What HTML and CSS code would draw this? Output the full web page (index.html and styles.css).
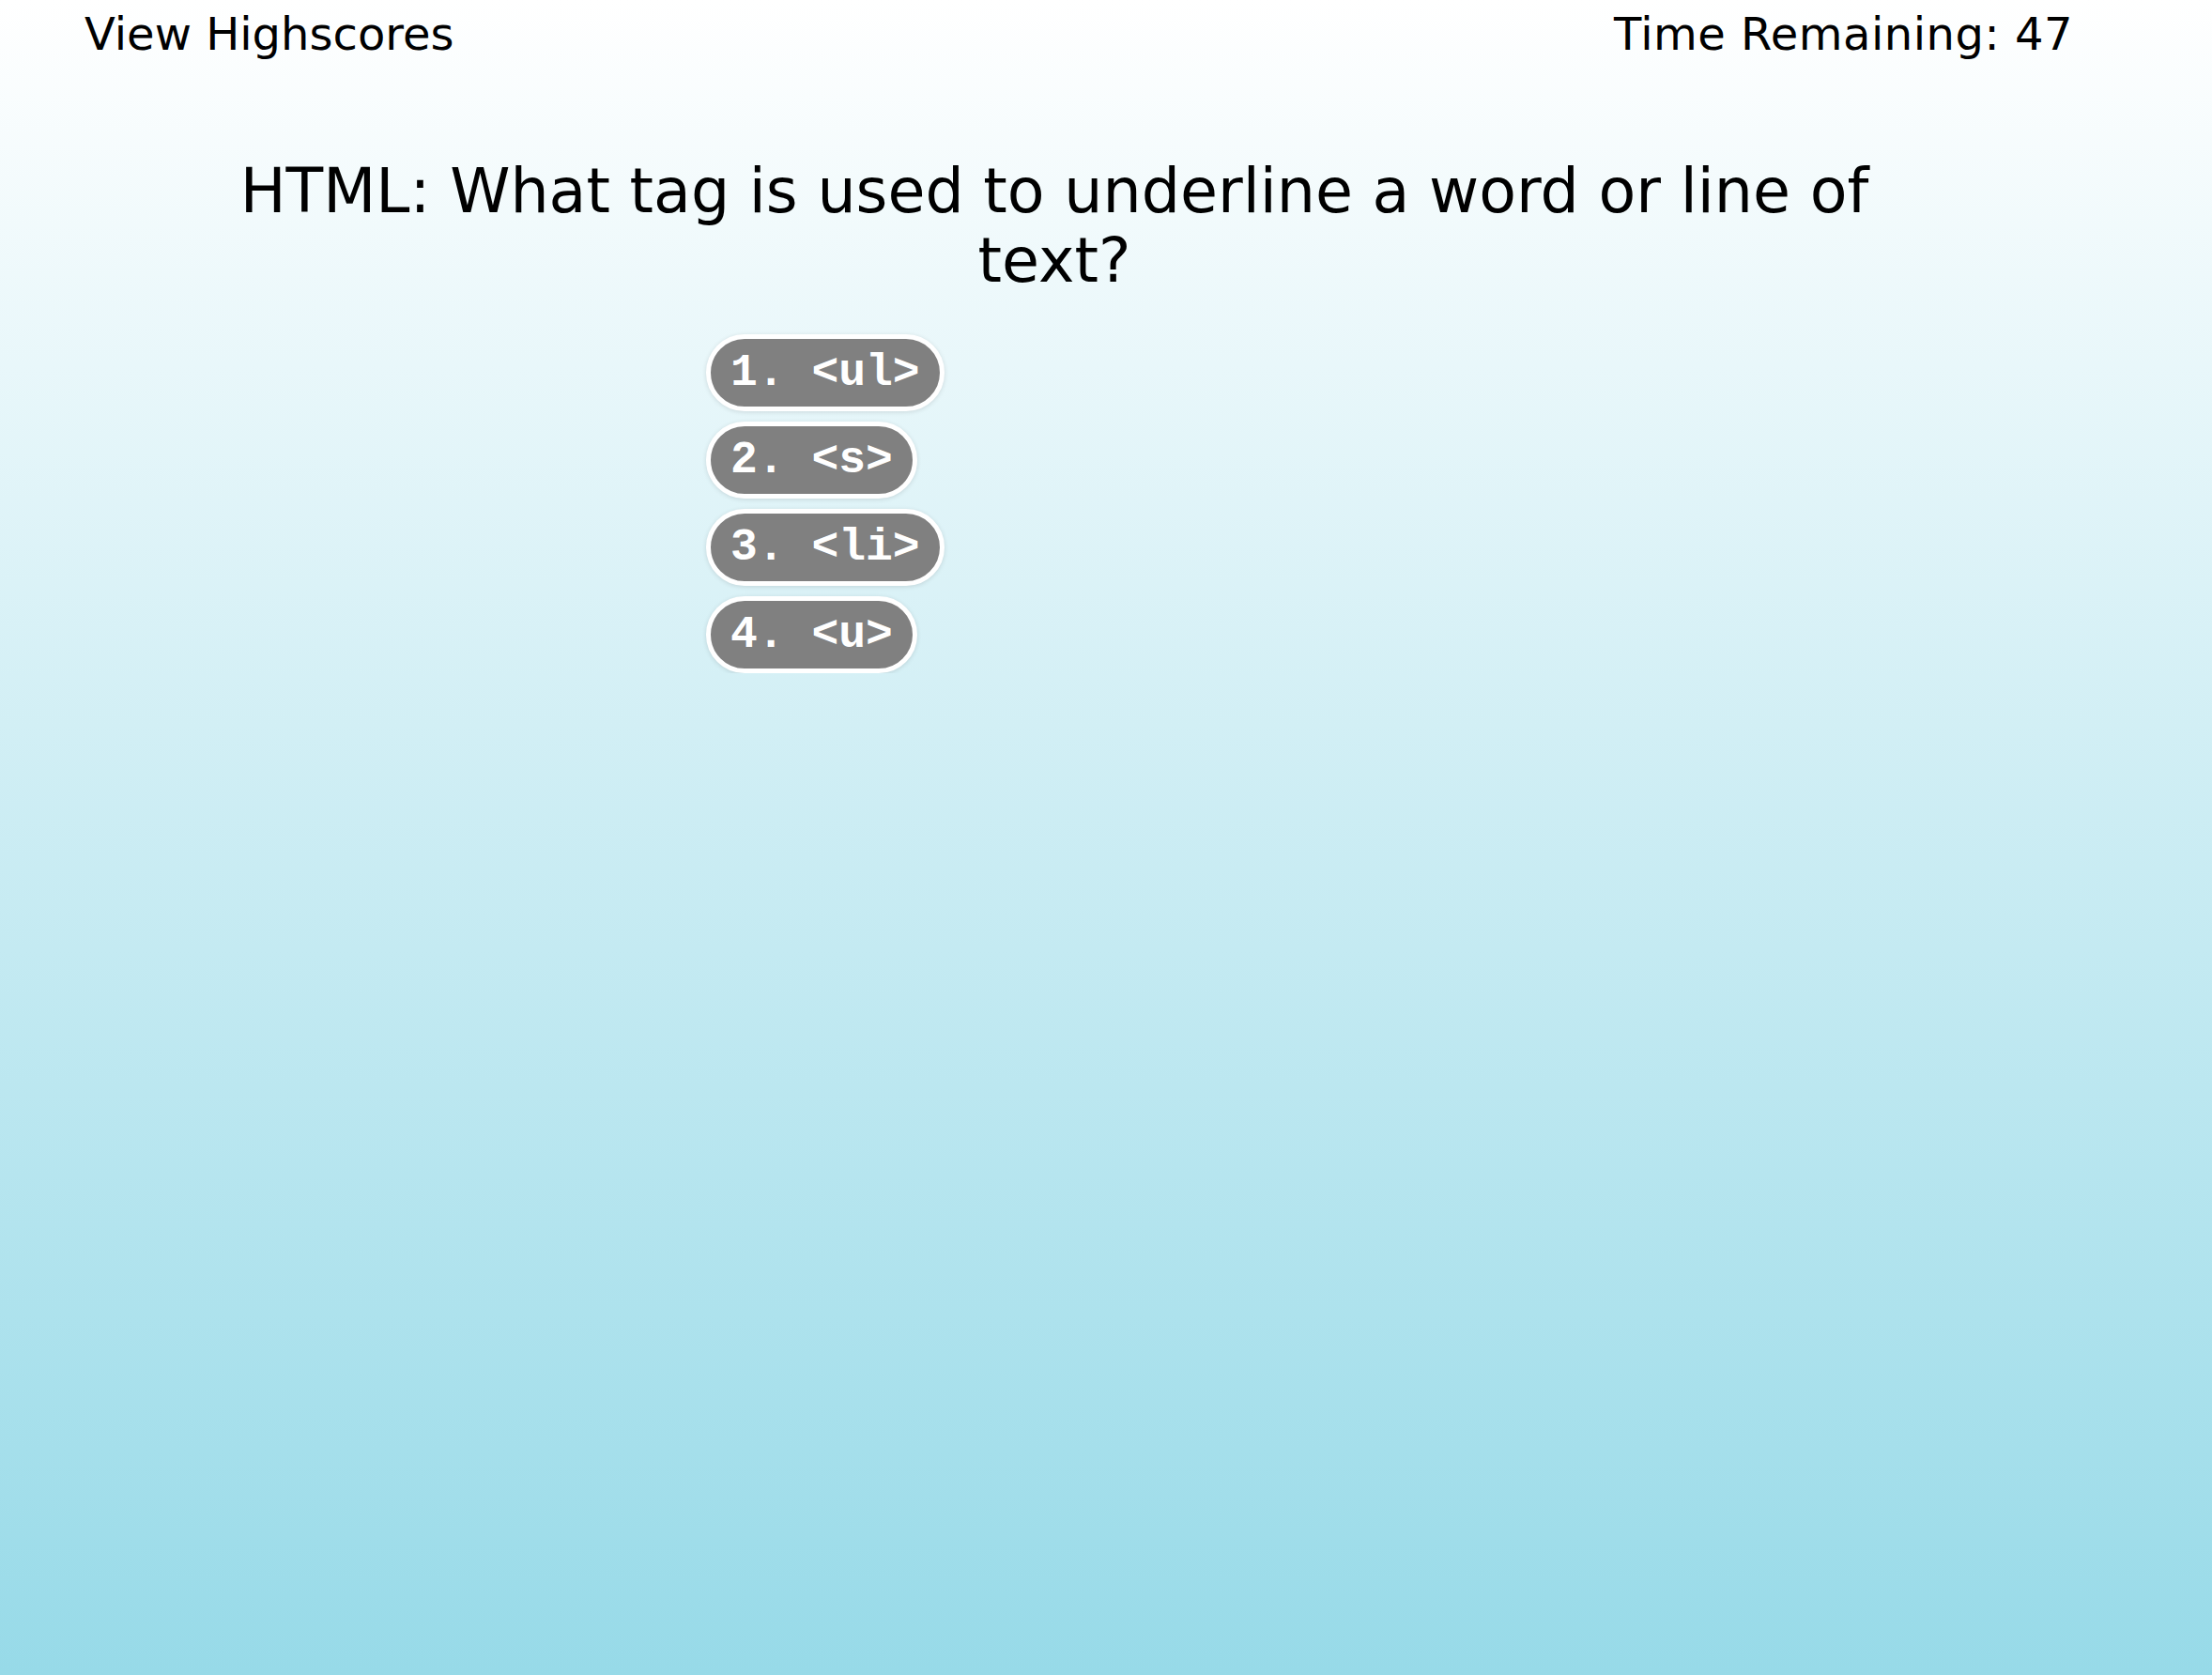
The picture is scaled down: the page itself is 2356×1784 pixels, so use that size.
FILE: index.html
```html
<!DOCTYPE html>
<html lang="en">
<head>
<meta charset="utf-8">
<title>Code Quiz</title>
<link rel="stylesheet" href="styles.css">
</head>
<body>
<header class="topbar">
  <a class="highscores">View Highscores</a>
  <div class="timer">Time Remaining: 47</div>
</header>
<main class="quiz">
  <h1 class="question">HTML: What tag is used to underline a word or line of text?</h1>
  <div class="answers">
    <button class="answer">1. &lt;ul&gt;</button>
    <button class="answer">2. &lt;s&gt;</button>
    <button class="answer">3. &lt;li&gt;</button>
    <button class="answer">4. &lt;u&gt;</button>
  </div>
</main>
</body>
</html>
```

FILE: styles.css
```css
html {
  height: 100%;
  background: linear-gradient(to bottom, #ffffff, #97dae8);
}

body {
  margin: 8px;
  font-family: "DejaVu Sans", Verdana, sans-serif;
  color: #000;
}

.topbar {
  display: flex;
  justify-content: space-between;
  padding: 0 140px 0 82px;
  font-size: 48px;
  line-height: normal;
}

.highscores {
  color: #000;
  text-decoration: none;
}

.timer {
  letter-spacing: 0.5px;
}

.question {
  width: 1780px;
  margin: 103px 0 0 225px;
  font-size: 65px;
  font-weight: normal;
  line-height: 74px;
  text-align: center;
}

.answers {
  display: flex;
  flex-direction: column;
  align-items: flex-start;
  gap: 11px;
  margin: 41px 0 0 744px;
}

.answer {
  font-family: "Liberation Mono", "Courier New", monospace;
  font-size: 48px;
  font-weight: bold;
  line-height: normal;
  color: #fff;
  background: #808080;
  border: 5px solid #fff;
  border-radius: 60px;
  padding: 9px 21px;
  box-shadow: 0 1px 5px rgba(0, 0, 0, 0.12);
  cursor: pointer;
}
```
